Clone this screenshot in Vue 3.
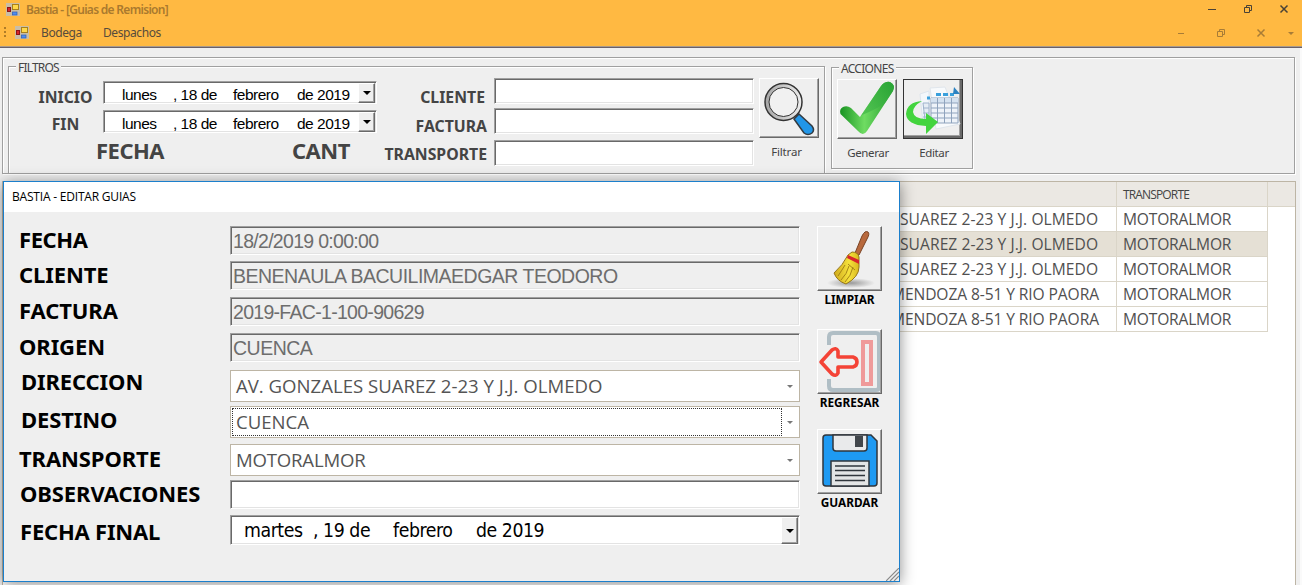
<script setup>
const dateFilters = [
  { name: 'INICIO', parts: ['lunes', ', 18 de', 'febrero', 'de 2019'] },
  { name: 'FIN', parts: ['lunes', ', 18 de', 'febrero', 'de 2019'] },
]
const textFilters = ['CLIENTE', 'FACTURA', 'TRANSPORTE']
const rows = [
  { address: 'SUAREZ 2-23 Y J.J. OLMEDO', carrier: 'MOTORALMOR' },
  { address: 'SUAREZ 2-23 Y J.J. OLMEDO', carrier: 'MOTORALMOR', selected: true },
  { address: 'SUAREZ 2-23 Y J.J. OLMEDO', carrier: 'MOTORALMOR' },
  { address: 'MENDOZA 8-51 Y RIO PAORA', carrier: 'MOTORALMOR' },
  { address: 'MENDOZA 8-51 Y RIO PAORA', carrier: 'MOTORALMOR' },
]
const fields = [
  { id: 'fecha', label: 'FECHA', type: 'locked', value: '18/2/2019 0:00:00' },
  { id: 'cliente', label: 'CLIENTE', type: 'locked', value: 'BENENAULA BACUILIMAEDGAR TEODORO' },
  { id: 'factura', label: 'FACTURA', type: 'locked', value: '2019-FAC-1-100-90629' },
  { id: 'origen', label: 'ORIGEN', type: 'locked', value: 'CUENCA' },
  { id: 'direccion', label: 'DIRECCION', type: 'combo', value: 'AV. GONZALES SUAREZ 2-23 Y J.J. OLMEDO' },
  { id: 'destino', label: 'DESTINO', type: 'combo', value: 'CUENCA', focused: true },
  { id: 'transporte', label: 'TRANSPORTE', type: 'combo', value: 'MOTORALMOR' },
  { id: 'observaciones', label: 'OBSERVACIONES', type: 'text', value: '' },
  { id: 'final', label: 'FECHA FINAL', type: 'date', parts: ['martes', ', 19 de', 'febrero', 'de 2019'] },
]
</script>

<template>
  <div class="app">
    <header class="titlebar">
      <svg class="app-icon" width="14" height="13" viewBox="0 0 14 13">
        <rect width="14" height="13" fill="#c9bda6" />
        <rect x="1.500" y="4.500" width="3" height="4" fill="#d8262c" stroke="#8d1515" />
        <rect x="6.500" y="1.500" width="6" height="5" fill="#ffd84a" stroke="#a7801c" />
        <rect x="6.500" y="9" width="4.500" height="3" fill="#4f8df0" stroke="#2b5cb5" stroke-width=".7" />
      </svg>
      <span class="title">Bastia - [Guias de Remision]</span>
      <svg class="win-buttons" width="96" height="18" viewBox="0 0 96 18" fill="none" stroke="#4a4236">
        <path d="M8 9.500h8" />
        <path d="M44.500 7.500h5v5h-5zM46.500 7v-1.500h5v5h-1.500" />
        <path d="M80.500 5.500l7 7M87.500 5.500l-7 7" stroke-width="1.500" />
      </svg>
    </header>
    <nav class="menubar">
      <svg class="grip" width="2" height="12" viewBox="0 0 2 12" fill="#b07c27">
        <path d="M0 0h2v2H0zM0 4h2v2H0zM0 8h2v2H0z" />
      </svg>
      <svg class="app-icon" width="14" height="13" viewBox="0 0 14 13">
        <rect width="14" height="13" fill="#c9bda6" />
        <rect x="1.500" y="4.500" width="3" height="4" fill="#d8262c" stroke="#8d1515" />
        <rect x="6.500" y="1.500" width="6" height="5" fill="#ffd84a" stroke="#a7801c" />
        <rect x="6.500" y="9" width="4.500" height="3" fill="#4f8df0" stroke="#2b5cb5" stroke-width=".7" />
      </svg>
      <span class="menu bodega">Bodega</span>
      <span class="menu">Despachos</span>
      <svg class="mdi-buttons" width="124" height="28" viewBox="0 0 124 28" fill="none" stroke="#a87c36">
        <path d="M0 15.500h6" />
        <path d="M39.500 13.500h5v5h-5zM41.500 13v-1.500h5v5h-1.500" />
        <path d="M79.500 11.500l7 7M86.500 11.500l-7 7" stroke-width="1.500" />
        <path d="M110 14h6l-3 3z" fill="#a87c36" stroke="none" />
      </svg>
    </nav>

    <main class="body">
      <section class="panel etched">
        <div class="group filters etched">
          <span class="legend">FILTROS</span>
          <div class="dates">
            <div class="date-rows">
              <div class="date-labels">
                <span v-for="d in dateFilters" :key="d.name">{{ d.name }}</span>
              </div>
              <div class="pickers">
                <div v-for="d in dateFilters" :key="d.name" class="picker sunken">
                  <span v-for="(p, i) in d.parts" :key="i" :class="'part p' + i">{{ p }}</span>
                  <span class="drop raised"><i></i></span>
                </div>
              </div>
            </div>
            <div class="totals"><b class="t-date">FECHA</b><b>CANT</b></div>
          </div>
          <div class="text-labels">
            <span v-for="t in textFilters" :key="t" :class="t.toLowerCase()">{{ t }}</span>
          </div>
          <div class="text-inputs">
            <div v-for="t in textFilters" :key="t" :class="['input sunken', 'in-' + t.toLowerCase()]"></div>
          </div>
          <div class="tool filter-tool">
            <div class="tool-btn raised">
              <svg width="56" height="56" viewBox="0 0 56 56">
                <defs>
                  <linearGradient id="rim" x1="0" x2="1"><stop offset="0" stop-color="#a4a4a4" /><stop offset="1" stop-color="#eee" /></linearGradient>
                </defs>
                <path d="M33 39l5-5 13 12q3 4 0 7-4 3-8 0z" fill="#2196e8" stroke="#333b42" stroke-width="1.500" />
                <circle cx="22.500" cy="22" r="18.500" fill="url(#rim)" stroke="#333" stroke-width="1.500" />
                <circle cx="22.500" cy="22" r="14.500" fill="#f1f1f1" stroke="#333" stroke-width="1" />
              </svg>
            </div>
            <span>Filtrar</span>
          </div>
        </div>

        <div class="group actions etched">
          <span class="legend">ACCIONES</span>
          <div class="tool">
            <div class="tool-btn raised">
              <svg width="58" height="58" viewBox="0 0 58 58">
                <defs>
                  <linearGradient id="tick" x1="0" y1="0" x2="1" y2="0"><stop offset="0" stop-color="#189322" /><stop offset=".45" stop-color="#6fdc62" /><stop offset="1" stop-color="#209a2c" /></linearGradient>
                  <linearGradient id="gloss" x1="0" y1="0" x2="0" y2="1"><stop offset="0" stop-color="#2ba738" /><stop offset="1" stop-color="#45b94a" /></linearGradient>
                </defs>
                <path d="M2.500 34Q1 29 5 27q4-2 8 1l9 9L43 6q4-5 9-4 6 3 3 9L29 51q-4 6-9 0z" fill="url(#tick)" />
                <path d="M22 37L43 6q4-5 9-4 6 3 3 9L47 23q-8 6-23 12z" fill="url(#gloss)" opacity=".7" />
              </svg>
            </div>
            <span>Generar</span>
          </div>
          <div class="tool">
            <div class="tool-btn raised default">
              <svg width="56" height="56" viewBox="0 0 56 56">
                <path d="M25 7l15-1 15 37-24 5z" fill="#f8fafc" stroke="#e0e6ec" />
                <path d="M15 13l9-3v32l-6 1z" fill="#f3f7fb" stroke="#dde5ee" />
                <path d="M18 22h6v18l-4-1z" fill="#e6edf5" stroke="#9fb2cc" />
                <path d="M18 27h6M18 32h6M18 36h6" stroke="#9fb2cc" />
                <path d="M22 17h3" stroke="#3aa0dc" stroke-width="3" />
                <path d="M26 17h27v25H26z" fill="#eef3f9" stroke="#8fa3bd" />
                <path d="M26 17h27v5H26z" fill="#d5e2f0" />
                <path d="M26 22h27M26 27h27M26 32h27M26 37h27M32.500 17v25M39.500 17v25M46.500 17v25" stroke="#8fa3bd" fill="none" />
                <path d="M31 13.500h5M38 13.500h5M45 13.500h4" stroke="#3aa0dc" stroke-width="3" />
                <path d="M48 13l1-7 6 7z" fill="#2c82c0" />
                <path d="M17 20Q2 21 1 33q1 11 20 12v8l12-12-12-9v6Q9 38 8 31q0-6 9-11z" fill="#43d43e" />
              </svg>
            </div>
            <span>Editar</span>
          </div>
        </div>
      </section>

      <section class="grid">
        <div class="row head"><span class="c1"></span><span class="c2">TRANSPORTE</span><span class="c3"></span></div>
        <div v-for="(r, i) in rows" :key="i" class="row" :class="{ selected: r.selected }">
          <span class="c1"><em :class="{ far: i > 2 }">{{ r.address }}</em></span><span class="c2">{{ r.carrier }}</span>
        </div>
      </section>
    </main>

    <div class="dialog">
      <div class="dialog-title">BASTIA - EDITAR GUIAS</div>
      <div class="dialog-body">
        <div class="form">
          <div v-for="f in fields" :key="f.id" class="line" :class="f.id">
            <label>{{ f.label }}</label>
            <div v-if="f.type === 'combo'" class="combo" :class="{ focused: f.focused }">
              <span>{{ f.value }}</span><i></i>
            </div>
            <div v-else-if="f.type === 'date'" class="field sunken big-date">
              <span v-for="(p, i) in f.parts" :key="i" :class="'part q' + i">{{ p }}</span>
              <span class="drop raised"><i></i></span>
            </div>
            <div v-else class="field sunken" :class="f.type">{{ f.value }}</div>
          </div>
        </div>
        <div class="side">
          <div class="side-btn raised">
            <svg width="62" height="62" viewBox="0 0 62 62">
              <defs>
                <radialGradient id="shade"><stop offset="0" stop-color="#9a9a9a" /><stop offset="1" stop-color="#efefef" /></radialGradient>
                <linearGradient id="straw" x1="0" x2="1"><stop offset="0" stop-color="#cfa91b" /><stop offset=".6" stop-color="#f6e23c" /><stop offset="1" stop-color="#d9b81d" /></linearGradient>
              </defs>
              <ellipse cx="33" cy="56" rx="24" ry="5" fill="url(#shade)" />
              <path d="M37 26l7-17q3-6 6-4 2 2-1 7l-8 16z" fill="#b8693d" stroke="#7a4324" />
              <path d="M34 25q6 0 7 5v10q0 10-13 17-9-3-12-11 9-8 14-18z" fill="url(#straw)" stroke="#957518" />
              <path d="M30 28l11 5v4l-12-6z" fill="#d7262b" />
              <path d="M27 38q-3 5-7 11M31 39q-2 8-8 14M35 40q-2 9-8 15M30 37l7 6" fill="none" stroke="#a68416" />
            </svg>
          </div>
          <b>LIMPIAR</b>
          <div class="side-btn raised">
            <svg width="62" height="62" viewBox="0 0 62 62" fill="none">
              <path d="M11 15V7q0-4 4-4h43q3 0 3 4v50q0 3-3 3H15q-4 0-4-4v-7" stroke="#b0bec5" stroke-width="4" />
              <rect x="45" y="12" width="8" height="42" stroke="#ef9a9a" stroke-width="4" />
              <path d="M3 32L14 20q4-3 6 1v6h15q4 1 4 5t-4 5H20v6q-2 4-6 1z" stroke="#f44336" stroke-width="3.600" stroke-linejoin="round" />
            </svg>
          </div>
          <b class="regresar">REGRESAR</b>
          <div class="side-btn raised">
            <svg width="62" height="62" viewBox="0 0 62 62" stroke="#30363c" stroke-width="1.500">
              <path d="M8 5h45l6 6v42q0 3-3 3H8q-3 0-3-3V8q0-3 3-3z" fill="#1e9af3" />
              <path d="M15 5h34v13q0 3-3 3H18q-3 0-3-3z" fill="#e9eaeb" />
              <path d="M37 6h8v11h-8z" fill="#41464b" stroke="none" />
              <path d="M13 31h38v25H13z" fill="#e3e5e6" />
              <path d="M17 36h30M17 40.500h30M17 45.500h30M17 50.500h30" />
            </svg>
          </div>
          <b>GUARDAR</b>
        </div>
      </div>
      <svg class="resizer" width="13" height="13" viewBox="0 0 13 13" stroke="#888" stroke-width="1.200">
        <path d="M0 13L13 0M4 13l9-9M8 13l5-5" />
      </svg>
    </div>
  </div>
</template>

<style scoped>
* { box-sizing: border-box; }
.app { position: relative; width: 1302px; height: 585px; overflow: hidden; background: #efefef; color: #444; display: flex; flex-direction: column; font-family: "Noto Sans", "Open Sans", sans-serif; white-space: nowrap; }
.titlebar { height: 18px; display: flex; align-items: center; background: #ffb942; padding-left: 6px; font-size: 12px; color: #aa7a2e; }
.title { margin-left: 6px; letter-spacing: -.7px; font-weight: 600; }
.win-buttons { margin-left: auto; margin-right: 6px; }
.menubar { height: 30px; display: flex; align-items: center; background: #ffb942; border-bottom: 1px solid #696069; box-shadow: inset 0 -1px #a89a8c; padding: 0 0 1px 4px; font-size: 12px; color: #574b3c; }
.grip { margin-top: 1px; }
.menubar .app-icon { margin-left: 9px; }
.menu { letter-spacing: -.4px; }
.bodega { margin: 0 21px 0 12px; }
.mdi-buttons { margin-left: auto; }
.body { flex: 1; display: flex; flex-direction: column; padding: 9px 0 0 2px; border-right: 2px solid #fafafa; }
.etched { border: 1px solid #a0a0a0; box-shadow: 1px 1px #fff, inset 1px 1px #fff; }
.panel { display: flex; align-items: flex-start; width: 1293px; height: 117px; overflow: hidden; flex: none; }
.group { position: relative; display: flex; align-items: flex-start; }
.legend { position: absolute; top: -7px; left: 7px; padding: 0 2px; background: #efefef; font-size: 12px; line-height: 16px; letter-spacing: -.8px; }
.actions .legend { letter-spacing: -.7px; }
.filters { margin: 8px 0 0 5px; width: 817px; height: 110px; }
.actions { margin: 9px 0 0 6px; width: 142px; height: 102px; padding: 11px 0 0 5px; gap: 6px; }
.dates { width: 368px; padding-top: 14px; }
.date-rows { display: flex; height: 58px; }
.date-labels { width: 94px; display: flex; flex-direction: column; align-items: center; padding: 3px 0 0 19px; font-size: 15.8px; font-weight: bold; line-height: 27px; }
.pickers { display: flex; flex-direction: column; gap: 6px; width: 274px; }
.sunken { border: 1px solid; border-color: #a0a0a0 #fff #fff #a0a0a0; box-shadow: inset 1px 1px #696969, inset -1px -1px #e3e3e3; background: #fff; }
.raised { border: 1px solid; border-color: #fff #696969 #696969 #fff; box-shadow: inset -1px -1px #a0a0a0; background: #efefef; }
.picker { height: 23px; display: flex; align-items: center; color: #000; font: 15.5px/20px "Liberation Sans", Arial, sans-serif; letter-spacing: -.5px; padding: 1px 1px 0 18px; }
.part { padding-top: 3px; }
.p0 { width: 51px; }
.p1 { width: 60px; }
.p2 { width: 64px; }
.drop { margin-left: auto; display: flex; align-items: center; justify-content: center; align-self: stretch; width: 17px; }
.drop i { border: 4px solid transparent; border-top-color: #000; border-bottom: 0; }
.totals { display: flex; height: 26px; font-size: 22px; line-height: 26px; padding-left: 87px; letter-spacing: -.5px; margin-top: -2px; }
.t-date { width: 196px; }
.text-labels { width: 117px; padding: 16px 7px 0 0; display: flex; flex-direction: column; align-items: flex-end; font-size: 15.8px; font-weight: bold; line-height: 28.5px; }
.text-labels .cliente { margin-right: 2px; }
.text-inputs { width: 260px; padding-top: 11px; display: flex; flex-direction: column; }
.input { height: 26px; }
.in-cliente { margin-bottom: 4px; }
.in-factura { margin-bottom: 6px; }
.tool { width: 60px; display: flex; flex-direction: column; align-items: center; font-size: 11.5px; letter-spacing: -.35px; line-height: 16px; }
.tool span { margin-top: 6px; }
.actions .tool span { margin-left: 2px; }
.filter-tool { margin: 11px 0 0 5px; }
.tool-btn { width: 60px; height: 60px; display: flex; align-items: center; justify-content: center; }
.tool-btn svg { flex: none; }
.default { outline: 1px solid #333; outline-offset: -1px; box-shadow: inset -2px -2px #696969, inset -3px -3px #a0a0a0; }
.filter-tool span { margin-right: 5px; letter-spacing: -.15px; }

.grid { margin-top: 7px; width: 1294px; flex: 1; border: 1px solid #bdb5a5; border-bottom: 0; background: #fff; }
.row { display: flex; width: 1265px; height: 25px; line-height: 25px; font-family: "Open Sans", sans-serif; font-size: 15.6px; color: #505050; }
.row span { border-right: 1px solid #dad5c8; border-bottom: 1px solid #dad5c8; }
.c1 { width: 1114px; padding-left: 897px; overflow: hidden; }
.c1 em { font-style: normal; letter-spacing: .06px; }
.c1 .far { margin-left: -9px; letter-spacing: -.1px; }
.c2 { width: 151px; padding-left: 6px; letter-spacing: -.2px; }
.selected { background: #e5e0d5; }
.head { width: 1292px; background: #ebe8e3; font-size: 12px; color: #444; }
.head .c2 { letter-spacing: -.85px; }
.c3 { flex: 1; }
.head .c3 { border-right: 0; }

.dialog { position: absolute; left: 3px; top: 181px; width: 897px; height: 401px; border: 1px solid #1b7fcc; background: #efefef; box-shadow: 0 2px 14px rgba(0, 0, 0, .45); color: #000; }
.dialog-title { height: 30px; background: #fff; padding-left: 8px; font: 12px/30px "Open Sans", sans-serif; letter-spacing: -.2px; }
.dialog-body { display: flex; padding: 14px 0 0 14px; }
.form { width: 799px; }
.line { display: flex; align-items: flex-start; height: 36px; }
.line label { width: 212px; padding-left: 1px; font-size: 22px; font-weight: bold; line-height: 28px; letter-spacing: -.1px; margin-top: -1px; }
.fecha { height: 35px; }
.origen { height: 37px; }
.destino { height: 38px; }
.observaciones { height: 35px; }
.line.fecha label { letter-spacing: -.4px; }
.line.direccion label { margin-top: -3px; padding-left: 3px; }
.line.destino label { padding-left: 3px; }
.line.transporte label { margin-top: 0; }
.line.observaciones label { padding-left: 2px; }
.line.final label { margin-top: 2px; padding-left: 2px; letter-spacing: -.2px; }
.field { width: 570px; height: 29px; font: 19.5px/28px "Liberation Sans", Arial, sans-serif; padding-left: 2px; }
.locked { background: #efefef; color: #6d6d6d; letter-spacing: -.5px; }
.fecha .locked, .factura .locked { letter-spacing: -.7px; }
.combo { width: 570px; height: 32px; border: 1px solid #bdb5a5; background: #fff; display: flex; align-items: center; padding: 1px; font: 18.6px/24px "Open Sans", sans-serif; color: #555; }
.combo span { flex: 1; align-self: stretch; border: 1px solid transparent; padding-left: 3px; line-height: 26px; }
.transporte .combo { letter-spacing: -.2px; }
.combo.focused span { border: 1px dotted #333; line-height: 25px; }
.combo i { margin: 0 5px; border: 3px solid transparent; border-top-color: #777; border-bottom: 0; }
.big-date { display: flex; font: 19.3px/26px "DejaVu Sans Condensed", "DejaVu Sans", sans-serif; font-stretch: condensed; letter-spacing: -.45px; padding: 1px 1px 0 13px; height: 30px; }
.big-date .part { padding-top: 1px; }
.q0 { width: 69px; }
.q1 { width: 80px; }
.q2 { width: 83px; }
.side { width: 65px; display: flex; flex-direction: column; align-items: center; }
.side-btn { width: 65px; height: 65px; flex: none; }
.side b { font-size: 11.8px; line-height: 17px; margin-bottom: 21px; }
.side .regresar { margin-bottom: 18px; }
.resizer { position: absolute; right: 0; bottom: 0; }
</style>
